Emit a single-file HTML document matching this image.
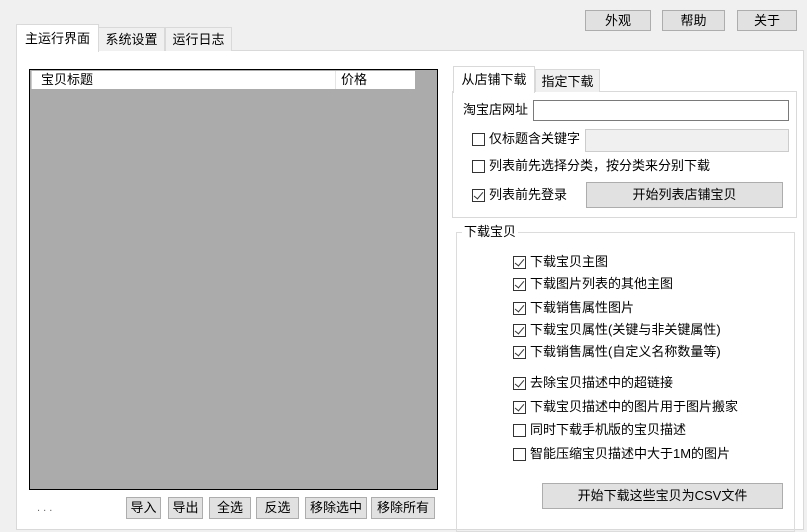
<!DOCTYPE html>
<html><head><meta charset="utf-8"><style>
*{box-sizing:border-box;margin:0;padding:0}
body{width:807px;height:527px;background:#f0f0f0;position:relative;overflow:hidden;font:12.5px "Liberation Sans","Noto Sans CJK SC",sans-serif;color:#000}
.a{position:absolute}
.btn{position:absolute;background:#e1e1e1;border:1px solid #adadad;text-align:center;font-size:13px}
.cb{position:absolute;width:13px;height:13px;border:1px solid #333;background:#fff}
.cb.c::after{content:"";position:absolute;left:3px;top:0px;width:4px;height:8px;border:solid #333;border-width:0 1.3px 1.3px 0;transform:rotate(40deg)}
.t{position:absolute;white-space:nowrap;font-size:13px;line-height:16px}
.tab{position:absolute;background:#f0f0f0;border:1px solid #d9d9d9;border-bottom:none;text-align:center;font-size:13px}
</style></head><body>
<div class="btn" style="left:585px;top:10px;width:66px;height:21px;line-height:19px">外观</div>
<div class="btn" style="left:662px;top:10px;width:63px;height:21px;line-height:19px">帮助</div>
<div class="btn" style="left:737px;top:10px;width:60px;height:21px;line-height:19px">关于</div>
<div class="a" style="left:16px;top:50px;width:788px;height:480px;background:#fff;border:1px solid #d9d9d9"></div>
<div class="tab" style="left:98px;top:27px;width:67px;height:24px;line-height:23px">系统设置</div>
<div class="tab" style="left:165px;top:27px;width:67px;height:24px;line-height:23px">运行日志</div>
<div class="tab" style="left:16px;top:24px;width:83px;height:28px;background:#fff;line-height:27px">主运行界面</div>
<div class="a" style="left:29px;top:69px;width:409px;height:421px;background:#ababab;border:1px solid #000"></div>
<div class="a" style="left:31px;top:71px;width:384px;height:18px;background:#fff;border-left:1px solid #ccc"></div>
<div class="a" style="left:335px;top:71px;width:1px;height:18px;background:#e5e5e5"></div>
<div class="t" style="left:41px;top:72px">宝贝标题</div>
<div class="t" style="left:341px;top:72px">价格</div>
<div class="t" style="left:37px;top:500px;color:#666;font-size:11px">. . .</div>
<div class="btn" style="left:126px;top:497px;width:35px;height:22px;line-height:20px">导入</div>
<div class="btn" style="left:168px;top:497px;width:35px;height:22px;line-height:20px">导出</div>
<div class="btn" style="left:209px;top:497px;width:42px;height:22px;line-height:20px">全选</div>
<div class="btn" style="left:256px;top:497px;width:43px;height:22px;line-height:20px">反选</div>
<div class="btn" style="left:305px;top:497px;width:62px;height:22px;line-height:20px">移除选中</div>
<div class="btn" style="left:371px;top:497px;width:64px;height:22px;line-height:20px">移除所有</div>
<div class="a" style="left:452px;top:91px;width:345px;height:127px;background:#fff;border:1px solid #d9d9d9"></div>
<div class="tab" style="left:535px;top:69px;width:65px;height:23px;line-height:23px">指定下载</div>
<div class="tab" style="left:453px;top:66px;width:82px;height:27px;background:#fff;line-height:25px">从店铺下载</div>
<div class="t" style="left:463px;top:102px">淘宝店网址</div>
<div class="a" style="left:533px;top:100px;width:256px;height:21px;border:1px solid #7a7a7a;background:#fff"></div>
<div class="cb" style="left:472px;top:133px"></div><div class="t" style="left:489px;top:131px">仅标题含关键字</div>
<div class="a" style="left:585px;top:129px;width:204px;height:23px;border:1px solid #ccc;background:#f0f0f0"></div>
<div class="cb" style="left:472px;top:160px"></div><div class="t" style="left:489px;top:158px">列表前先选择分类，按分类来分别下载</div>
<div class="cb c" style="left:472px;top:189px"></div><div class="t" style="left:489px;top:187px">列表前先登录</div>
<div class="btn" style="left:586px;top:182px;width:197px;height:26px;line-height:24px">开始列表店铺宝贝</div>
<div class="a" style="left:456px;top:232px;width:339px;height:300px;border:1px solid #dcdcdc"></div>
<div class="t" style="left:462px;top:224px;background:#fff;padding:0 2px">下载宝贝</div>
<div class="cb c" style="left:513px;top:256px"></div><div class="t" style="left:530px;top:254px">下载宝贝主图</div>
<div class="cb c" style="left:513px;top:278px"></div><div class="t" style="left:530px;top:276px">下载图片列表的其他主图</div>
<div class="cb c" style="left:513px;top:302px"></div><div class="t" style="left:530px;top:300px">下载销售属性图片</div>
<div class="cb c" style="left:513px;top:324px"></div><div class="t" style="left:530px;top:322px">下载宝贝属性(关键与非关键属性)</div>
<div class="cb c" style="left:513px;top:346px"></div><div class="t" style="left:530px;top:344px">下载销售属性(自定义名称数量等)</div>
<div class="cb c" style="left:513px;top:377px"></div><div class="t" style="left:530px;top:375px">去除宝贝描述中的超链接</div>
<div class="cb c" style="left:513px;top:401px"></div><div class="t" style="left:530px;top:399px">下载宝贝描述中的图片用于图片搬家</div>
<div class="cb" style="left:513px;top:424px"></div><div class="t" style="left:530px;top:422px">同时下载手机版的宝贝描述</div>
<div class="cb" style="left:513px;top:448px"></div><div class="t" style="left:530px;top:446px">智能压缩宝贝描述中大于1M的图片</div>
<div class="btn" style="left:542px;top:483px;width:241px;height:26px;line-height:24px">开始下载这些宝贝为CSV文件</div>
</body></html>
